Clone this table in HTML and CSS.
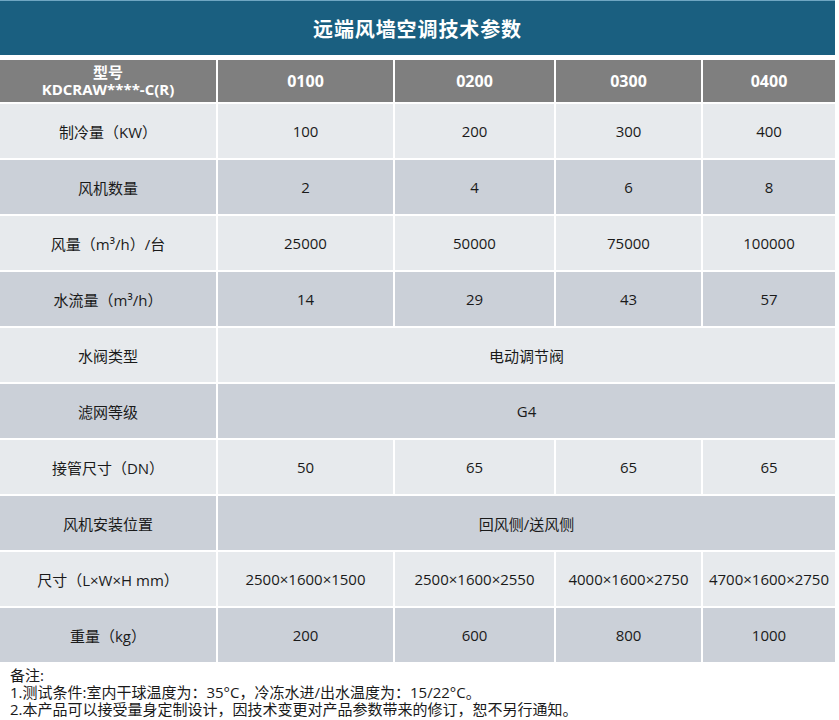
FILE: index.html
```html
<!DOCTYPE html>
<html lang="zh-CN">
<head>
<meta charset="utf-8">
<title>远端风墙空调技术参数</title>
<link rel="stylesheet" href="styles.css">
</head>
<body>
<div class="sheet">
  <div class="title">远端风墙空调技术参数</div>
  <div class="grid">
    <div class="cell head model"><span>型号<br>KDCRAW****-C(R)</span></div>
    <div class="cell head">0100</div>
    <div class="cell head">0200</div>
    <div class="cell head">0300</div>
    <div class="cell head">0400</div>

    <div class="cell light">制冷量（KW）</div>
    <div class="cell light">100</div>
    <div class="cell light">200</div>
    <div class="cell light">300</div>
    <div class="cell light">400</div>

    <div class="cell dark">风机数量</div>
    <div class="cell dark">2</div>
    <div class="cell dark">4</div>
    <div class="cell dark">6</div>
    <div class="cell dark">8</div>

    <div class="cell light">风量（m³/h）/台</div>
    <div class="cell light">25000</div>
    <div class="cell light">50000</div>
    <div class="cell light">75000</div>
    <div class="cell light">100000</div>

    <div class="cell dark">水流量（m³/h）</div>
    <div class="cell dark">14</div>
    <div class="cell dark">29</div>
    <div class="cell dark">43</div>
    <div class="cell dark">57</div>

    <div class="cell light">水阀类型</div>
    <div class="cell light span4">电动调节阀</div>

    <div class="cell dark">滤网等级</div>
    <div class="cell dark span4">G4</div>

    <div class="cell light">接管尺寸（DN）</div>
    <div class="cell light">50</div>
    <div class="cell light">65</div>
    <div class="cell light">65</div>
    <div class="cell light">65</div>

    <div class="cell dark">风机安装位置</div>
    <div class="cell dark span4">回风侧/送风侧</div>

    <div class="cell light">尺寸（L×W×H mm）</div>
    <div class="cell light">2500×1600×1500</div>
    <div class="cell light">2500×1600×2550</div>
    <div class="cell light">4000×1600×2750</div>
    <div class="cell light">4700×1600×2750</div>

    <div class="cell dark">重量（kg）</div>
    <div class="cell dark">200</div>
    <div class="cell dark">600</div>
    <div class="cell dark">800</div>
    <div class="cell dark">1000</div>
  </div>
  <div class="notes">
    <p>备注:</p>
    <p>1.测试条件:室内干球温度为：35°C，冷冻水进/出水温度为：15/22°C。</p>
    <p>2.本产品可以接受量身定制设计，因技术变更对产品参数带来的修订，恕不另行通知。</p>
  </div>
</div>
</body>
</html>
```
FILE: styles.css
```css
html, body {
  margin: 0;
  padding: 0;
  background: #ffffff;
}
body {
  font-family: "Open Sans", "Noto Sans CJK SC", sans-serif;
  color: #1a1a1a;
}
.sheet {
  width: 835px;
}
.title {
  height: 54px;
  border-top: 1px solid #6fa6c2;
  background: #1a5f80;
  color: #ffffff;
  font-size: 20px;
  font-weight: 700;
  display: flex;
  align-items: center;
  justify-content: center;
  margin-bottom: 5px;
  letter-spacing: 0.9px;
}
.grid {
  display: grid;
  grid-template-columns: 216px 175px 159px 145px 132px;
  grid-template-rows: 42px repeat(10, 54px);
  gap: 2px;
  background: #ffffff;
}
.cell {
  display: flex;
  align-items: center;
  justify-content: center;
  text-align: center;
  font-size: 15px;
  white-space: nowrap;
}
.head {
  background: #7f7f7f;
  color: #ffffff;
  font-weight: 700;
  font-size: 16px;
  line-height: 17px;
}
.head.model {
  font-size: 15px;
}
.light {
  background: #e7eaed;
}
.dark {
  background: #cbd0d8;
}
.span4 {
  grid-column: span 4;
}
.notes {
  padding: 5px 0 0 10px;
  font-size: 15px;
  line-height: 17px;
  color: #1a1a1a;
}
.notes p {
  margin: 0;
}
```
